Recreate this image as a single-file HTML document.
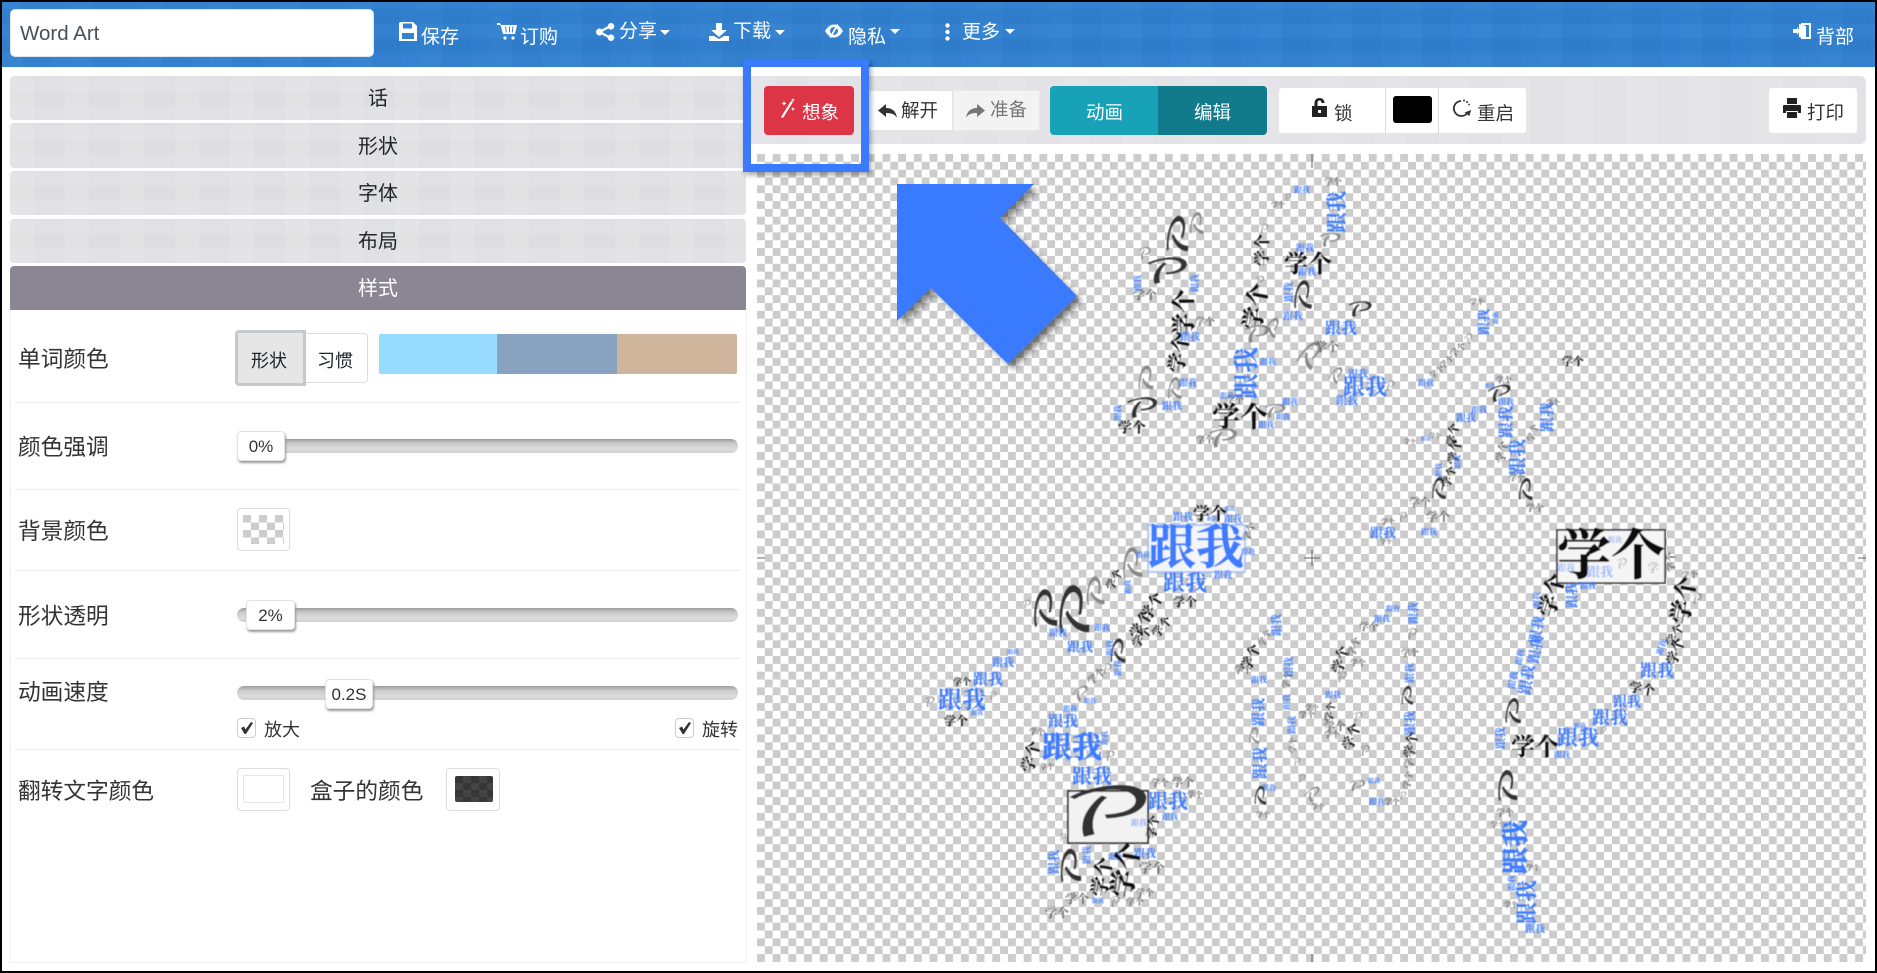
<!DOCTYPE html>
<html lang="zh"><head><meta charset="utf-8"><title>Word Art</title>
<style>
*{box-sizing:border-box}
html,body{margin:0;padding:0;background:#fff}
body{width:1877px;height:973px;position:relative;overflow:hidden;font-family:"Liberation Sans","Noto Sans CJK SC",sans-serif;color:#212529}
.a{position:absolute}
.t{position:absolute;white-space:nowrap;line-height:1}
.hd{left:0;top:2px;width:1877px;height:65px;background-color:#2f7fcf;background-image:repeating-linear-gradient(90deg,rgba(255,255,255,.02) 0 22px,rgba(0,0,0,.012) 22px 51px,rgba(255,255,255,.012) 51px 70px),repeating-linear-gradient(0deg,rgba(255,255,255,.018) 0 14px,rgba(0,0,0,.015) 14px 29px)}
.w{color:#fff;font-size:19px}
.car{position:absolute;width:0;height:0;border-left:5px solid transparent;border-right:5px solid transparent;border-top:5px solid #fff}
.bar{left:10px;width:736px;border-radius:4px;background-color:#e2e2e6;background-image:repeating-linear-gradient(90deg,rgba(255,255,255,.05) 0 24px,rgba(0,0,0,.006) 24px 55px),repeating-linear-gradient(0deg,rgba(255,255,255,.04) 0 14px,rgba(0,0,0,.006) 14px 29px);text-align:center;font-size:20px;color:#212529}
.dv{left:15px;width:725px;height:1px;background:#ececec}
.lb{font-size:22.7px;color:#333}
.track{left:237px;width:501px;height:14px;border-radius:7px;background:linear-gradient(#9c9c9c,#c8c8c8 30%,#dcdcdc 70%,#d0d0d0)}
.hdl{background:#fff;border:1px solid #e2e2e2;border-radius:4px;box-shadow:1px 2px 2px #999;text-align:center;font-size:17px;color:#333;line-height:30px;height:30px}
.box{background:#fff;border:1px solid #ddd;border-radius:4px;width:53px;height:43px}
.chk{width:19px;height:20px;border:1px solid #ccc;border-radius:4px;background:#fff}
.checks{background-color:#fff;background-image:conic-gradient(#fff 25%,#ccc 25% 50%,#fff 50% 75%,#ccc 75%);background-size:15.7px 15.7px}
svg.i{position:absolute;fill:currentColor;overflow:visible}
svg.cl text{text-anchor:middle;dominant-baseline:central}
.b{fill:#3d7bff;font-family:"Liberation Serif","Noto Serif CJK SC",serif;font-weight:700}
.k{fill:#111;font-family:"Liberation Serif","Noto Serif CJK SC",serif;font-weight:700}
.g{fill:#666;font-family:"Liberation Serif","Noto Serif CJK SC",serif;font-weight:700}
.p{fill:#333;font-family:"DejaVu Math TeX Gyre","DejaVu Serif","Liberation Serif",serif}
.q{fill:#888;font-family:"DejaVu Math TeX Gyre","DejaVu Serif","Liberation Serif",serif}
.s{stroke-width:.5px}
.b.s{stroke:#3d7bff}.k.s{stroke:#111}
</style></head><body>

<div class="a hd"></div>
<div class="a" style="left:10px;top:9px;width:364px;height:48px;background:#fff;border-radius:5px;border:1px solid #dfe6ee"></div>
<div class="t" style="left:20px;top:24px;font-size:20.5px;color:#495057">Word Art</div>

<svg class="i" style="left:399px;top:22px;color:#fff" width="18" height="19" viewBox="0 0 18 19"><path d="M1 0h13l4 4v15H0V1zM4 1.500v5h9v-5zM3 11v6h12v-6z" fill-rule="evenodd"/></svg>
<div class="t w" style="left:421px;top:28px">保存</div>
<svg class="i" style="left:497px;top:23px;color:#fff" width="20" height="17" viewBox="0 0 20 17"><path d="M0 0h3l1 2h16l-2 9H6L3.500 2H0z M8 3.500l.8 6h1l-.8-6zm4 0v6h1v-6zm3.500 0l-.8 6h1l.8-6z" fill-rule="evenodd"/><circle cx="8" cy="15" r="1.600"/><circle cx="16" cy="15" r="1.600"/></svg>
<div class="t w" style="left:520px;top:28px">订购</div>
<svg class="i" style="left:596px;top:23px;color:#fff" width="19" height="18" viewBox="0 0 19 18"><circle cx="3.500" cy="9" r="3.500"/><circle cx="15" cy="3.300" r="3.300"/><circle cx="15" cy="14.700" r="3.300"/><path d="M3 8L14 2l1 2L4 10zM4 8l11 6-1 2L3 10z"/></svg>
<div class="t w" style="left:619px;top:22px">分享</div><div class="car" style="left:660px;top:30px"></div>
<svg class="i" style="left:709px;top:23px;color:#fff" width="20" height="18" viewBox="0 0 20 18"><path d="M7 0h6v7h5l-8 7-8-7h5zM0 13h5l5 3 5-3h5v5H0z"/></svg>
<div class="t w" style="left:733px;top:22px">下载</div><div class="car" style="left:775px;top:30px"></div>
<svg class="i" style="left:825px;top:24px;color:#fff" width="18" height="14" viewBox="0 0 18 14"><path d="M0 7C3 2 6 .5 9 .5S15 2 18 7c-3 5-6 6.500-9 6.500S3 12 0 7zm5 0c0 2 2 4 4 4s4-2 4-4-2-4-4-4-4 2-4 4z" fill-rule="evenodd"/><path d="M12 0l1.500 1L6 14l-1.500-1z"/></svg>
<div class="t w" style="left:848px;top:28px">隐私</div><div class="car" style="left:890px;top:29px"></div>
<svg class="i" style="left:945px;top:23px;color:#fff" width="5" height="18" viewBox="0 0 5 18"><circle cx="2.500" cy="2.500" r="2.200"/><circle cx="2.500" cy="9" r="2.200"/><circle cx="2.500" cy="15.500" r="2.200"/></svg>
<div class="t w" style="left:962px;top:23px">更多</div><div class="car" style="left:1005px;top:29px"></div>
<svg class="i" style="left:1793px;top:23px;color:#fff" width="18" height="16" viewBox="0 0 18 16"><path d="M8 0h10v16H8v-2l8 0V2L8 2z" fill-rule="evenodd"/><path d="M6 1l7 2v13l-7-2zM0 6h4V4l3 4-3 4v-2H0z"/></svg>
<div class="t w" style="left:1816px;top:28px">背部</div>

<!-- accordion -->
<div class="a bar" style="top:76px;height:44px;line-height:47px">话</div>
<div class="a bar" style="top:123px;height:45px;line-height:49px">形状</div>
<div class="a bar" style="top:171px;height:44px;line-height:47px">字体</div>
<div class="a bar" style="top:219px;height:44px;line-height:46px">布局</div>
<div class="a bar" style="top:266px;height:44px;line-height:47px;background-color:#8a8693;background-image:none;color:#fff;border-radius:4px 4px 0 0">样式</div>

<div class="a" style="left:10px;top:310px;width:737px;height:653px;border:1px solid #efefef;border-top:0"></div>

<!-- row 1 -->
<div class="t lb" style="left:18px;top:348px">单词颜色</div>
<div class="a" style="left:305px;top:333px;width:63px;height:50px;background:#fff;border:1px solid #ddd;border-radius:0 4px 4px 0"></div>
<div class="a" style="left:235px;top:330px;width:71px;height:56px;background:#e6e6e6;border:3px solid #c5c9cd;border-radius:4px 0 0 4px"></div>
<div class="t" style="left:251px;top:352px;font-size:18px">形状</div>
<div class="t" style="left:317px;top:352px;font-size:18px">习惯</div>
<div class="a" style="left:379px;top:334px;width:118px;height:40px;background:#97dcfe;border-radius:2px 0 0 2px"></div>
<div class="a" style="left:497px;top:334px;width:120px;height:40px;background:#87a3bf"></div>
<div class="a" style="left:617px;top:334px;width:120px;height:40px;background:#ceb59b;border-radius:0 2px 2px 0"></div>
<div class="a dv" style="top:402px"></div>

<!-- row 2 -->
<div class="t lb" style="left:18px;top:436px">颜色强调</div>
<div class="a track" style="top:439px"></div>
<div class="a hdl" style="left:237px;top:431px;width:48px">0%</div>
<div class="a dv" style="top:489px"></div>

<!-- row 3 -->
<div class="t lb" style="left:18px;top:520px">背景颜色</div>
<div class="a box" style="left:237px;top:508px"></div>
<div class="a" style="left:243px;top:515px;width:41px;height:29px;background-color:#fff;background-image:conic-gradient(#fff 25%,#ccc 25% 50%,#fff 50% 75%,#ccc 75%);background-size:16px 15px"></div>
<div class="a dv" style="top:570px"></div>

<!-- row 4 -->
<div class="t lb" style="left:18px;top:605px">形状透明</div>
<div class="a track" style="top:608px"></div>
<div class="a hdl" style="left:246px;top:600px;width:49px">2%</div>
<div class="a dv" style="top:658px"></div>

<!-- row 5 -->
<div class="t lb" style="left:18px;top:681px">动画速度</div>
<div class="a track" style="top:686px"></div>
<div class="a hdl" style="left:325px;top:679px;width:48px">0.2S</div>
<div class="a chk" style="left:237px;top:718px"></div>
<svg class="i" style="left:240px;top:722px;color:#333" width="13" height="12" viewBox="0 0 13 12"><path d="M1 6l3-1.500 1.500 3L11 0l2 1-7 11h-1.500z"/></svg>
<div class="t" style="left:264px;top:721px;font-size:18px;color:#333">放大</div>
<div class="a chk" style="left:675px;top:718px"></div>
<svg class="i" style="left:678px;top:722px;color:#333" width="13" height="12" viewBox="0 0 13 12"><path d="M1 6l3-1.500 1.500 3L11 0l2 1-7 11h-1.500z"/></svg>
<div class="t" style="left:702px;top:721px;font-size:18px;color:#333">旋转</div>
<div class="a dv" style="top:749px"></div>

<!-- row 6 -->
<div class="t lb" style="left:18px;top:780px">翻转文字颜色</div>
<div class="a box" style="left:237px;top:768px"></div>
<div class="a" style="left:243px;top:775px;width:41px;height:28px;border:1px solid #e6e6e6"></div>
<div class="t lb" style="left:310px;top:780px">盒子的颜色</div>
<div class="a box" style="left:446px;top:768px;width:54px"></div>
<div class="a" style="left:455px;top:776px;width:38px;height:26px;background-color:#3a3a3a;background-image:conic-gradient(#444 25%,#363636 25% 50%,#444 50% 75%,#363636 75%);background-size:16px 14px;border-radius:2px"></div>

<!-- toolbar -->
<div class="a" style="left:745px;top:76px;width:1121px;height:68px;background-color:#e4e4e8;background-image:repeating-linear-gradient(90deg,rgba(255,255,255,.04) 0 30px,rgba(0,0,0,.005) 30px 63px);border-radius:0 6px 6px 0"></div>

<!-- canvas -->
<div class="a checks" style="left:757px;top:154px;width:1109px;height:808px"></div>

<!-- toolbar buttons -->
<div class="a" style="left:869px;top:90px;width:84px;height:41px;background:#fff;border:1px solid #e4e4e4;border-left:0"></div>
<svg class="i" style="left:878px;top:104px;color:#333" width="19" height="14" viewBox="0 0 19 14"><path d="M8 0v4c6 0 10 3 11 10-2-4-6-5-11-5v4L0 6.500z"/></svg>
<div class="t" style="left:901px;top:102px;font-size:18.500px;color:#333">解开</div>
<div class="a" style="left:953px;top:90px;width:87px;height:41px;background:#f3f3f4;border:1px solid #e8e8e8;border-radius:0 3px 3px 0"></div>
<svg class="i" style="left:966px;top:104px;color:#777" width="19" height="14" viewBox="0 0 19 14"><path d="M11 0v4C5 4 1 7 0 14c2-4 6-5 11-5v4l8-6.500z"/></svg>
<div class="t" style="left:990px;top:101px;font-size:18.500px;color:#777">准备</div>

<div class="a" style="left:1050px;top:86px;width:108px;height:49px;background:#17a2b8;border-radius:4px 0 0 4px"></div>
<div class="a" style="left:1158px;top:86px;width:109px;height:49px;background:#117a8b;border-radius:0 4px 4px 0"></div>
<div class="t" style="left:1086px;top:104px;font-size:18.500px;color:#fff">动画</div>
<div class="t" style="left:1194px;top:104px;font-size:18.500px;color:#fff">编辑</div>

<div class="a" style="left:1278px;top:87px;width:249px;height:47px;background:#fff;border:1px solid #e6e6e6;border-radius:4px"></div>
<div class="a" style="left:1385px;top:87px;width:1px;height:47px;background:#ddd"></div>
<div class="a" style="left:1438px;top:87px;width:1px;height:47px;background:#ddd"></div>
<svg class="i" style="left:1312px;top:98px;color:#222" width="15" height="19" viewBox="0 0 15 19"><path d="M0 8h2.500V5c0-3 2-5 5-5s5 2 5 5h-3c0-1.500-.7-2.500-2-2.500S5.500 3.500 5.500 5v3H15v11H0zm6 4v3h3v-3z" fill-rule="evenodd"/></svg>
<div class="t" style="left:1334px;top:105px;font-size:18.500px;color:#333">锁</div>
<div class="a" style="left:1393px;top:96px;width:39px;height:27px;background:#000;border-radius:3px"></div>
<svg class="i" style="left:1452px;top:99px;color:#333" width="20" height="19" viewBox="0 0 20 19" fill="none"><path d="M9 2a7.500 7.500 0 1 0 7 11" stroke="currentColor" stroke-width="1.800" fill="none"/><path d="M19 11l-1.500 6-5-3.500z" fill="currentColor"/><circle cx="12" cy="1.500" r="1" fill="currentColor"/><circle cx="15" cy="3" r="1" fill="currentColor"/><circle cx="17" cy="5.500" r=".9" fill="currentColor"/></svg>
<div class="t" style="left:1477px;top:105px;font-size:18.500px;color:#333">重启</div>

<div class="a" style="left:1768px;top:87px;width:90px;height:47px;background:#fff;border:1px solid #e6e6e6;border-radius:4px"></div>
<svg class="i" style="left:1783px;top:98px;color:#222" width="18" height="20" viewBox="0 0 18 20"><path d="M4 0h10v6H4zM1 7h16c.6 0 1 .4 1 1v7h-3v-2H3v2H0V8c0-.6.4-1 1-1zM4 14h10v6H4z"/></svg>
<div class="t" style="left:1807px;top:104px;font-size:18.500px;color:#333">打印</div>

<!-- word cloud -->
<svg class="a cl" style="left:0;top:0" width="1877" height="973" viewBox="0 0 1877 973">
<defs><filter id="bl" x="-5%" y="-5%" width="110%" height="110%"><feGaussianBlur stdDeviation=".6"/></filter></defs>
<path d="M1312 154v14M1312 954v8M757 558h8M1858 558h8M1312 550v16M1304 558h16" stroke="#666" stroke-width="1" fill="none"/>
<g filter="url(#bl)">
<rect x="1148" y="525" width="97" height="47" fill="#f3f5f8" stroke="#9dbcff" stroke-width="1.500"/>
<rect x="1557" y="530" width="108" height="53" fill="#f5f5f5" stroke="#222" stroke-width="1.500"/>
<rect x="1068" y="791" width="80" height="52" fill="#f2f2f2" stroke="#111" stroke-width="1.500"/>
<text class="b s" x="1196" y="548" font-size="48">跟我</text>
<text class="k s" x="1611" y="556" font-size="54">学个</text>
<text class="p" transform="translate(1108 817) scale(1.700 1)" font-size="66">𝒫</text>

<text class="b" x="1600" y="572" font-size="13" opacity=".5">跟我</text><text class="b" x="1566" y="568" font-size="9" opacity=".5">跟我</text><text class="b" x="1615" y="540" font-size="7" opacity=".5">跟我</text><text class="q" x="1622" y="565" font-size="14" opacity=".6">𝒫</text><text class="g" x="1653" y="568" font-size="12" opacity=".4">学</text>

<!-- lower-left -->
<text class="k" x="1210" y="514" font-size="17">学个</text>
<text class="b" x="1185" y="583" font-size="22">跟我</text>
<text class="k" x="1185" y="602" font-size="12">学个</text>
<text class="b s" x="1072" y="748" font-size="30">跟我</text>
<text class="b" x="962" y="701" font-size="24">跟我</text>
<text class="b" x="1092" y="777" font-size="20">跟我</text>
<text class="b" x="1168" y="802" font-size="20">跟我</text>
<text class="b" x="1063" y="722" font-size="15">跟我</text>
<text class="b" x="988" y="680" font-size="15">跟我</text>
<text class="b" x="1003" y="663" font-size="11">跟我</text>
<text class="b" x="1080" y="647" font-size="13">跟我</text>
<text class="k" x="956" y="721" font-size="12">学个</text>
<text class="p" transform="translate(1080 613) rotate(-75) scale(1.700 1)" font-size="44">𝒫</text>
<text class="p" transform="translate(1050 611) rotate(-75) scale(1.700 1)" font-size="34">𝒫</text>
<text class="q" transform="translate(1099 593) rotate(-75) scale(1.700 1)" font-size="26">𝒫</text>
<text class="q" transform="translate(1137 565) rotate(-75) scale(1.700 1)" font-size="28">𝒫</text>
<text class="k" transform="rotate(-60 1153 607)" x="1153" y="607" font-size="15">学个</text>
<text class="k" transform="rotate(-60 1142 625)" x="1142" y="625" font-size="15">学个</text>
<text class="k" transform="rotate(-50 1162 627)" x="1162" y="627" font-size="12">学个</text>
<text class="k" transform="rotate(-50 1142 637)" x="1142" y="637" font-size="12">学个</text>
<text class="p" transform="translate(1122 653) rotate(-70) scale(1.700 1)" font-size="22">𝒫</text>
<text class="q" x="1107" y="670" font-size="13">𝒫</text>
<text class="g" transform="rotate(-40 1097 677)" x="1097" y="677" font-size="10">学个</text>
<text class="q" transform="translate(1082 695) rotate(-30) scale(1.700 1)" font-size="15">𝒫</text>
<text class="b" x="1090" y="702" font-size="6">跟我</text><text class="b" x="1070" y="709" font-size="7">跟我</text>
<text class="b" transform="rotate(-90 1118 668)" x="1118" y="668" font-size="8">跟我</text>
<text class="b" transform="rotate(-90 1110 648)" x="1110" y="648" font-size="8">跟我</text>
<text class="b" x="1102" y="628" font-size="8">跟我</text><text class="b" x="1058" y="633" font-size="9">跟我</text>
<text class="q" x="1027" y="606" font-size="11">𝒫</text>
<text class="b" transform="rotate(-90 1128 587)" x="1128" y="587" font-size="7">跟我</text>
<text class="k" transform="rotate(-60 1115 580)" x="1115" y="580" font-size="11">学个</text>
<text class="b" x="1143" y="555" font-size="7">跟我</text><text class="b" x="1013" y="653" font-size="6">跟我</text>
<text class="k" x="962" y="682" font-size="9">学个</text><text class="q" x="930" y="703" font-size="13">𝒫</text>
<text class="q" x="993" y="697" font-size="10">𝒫</text><text class="b" x="977" y="714" font-size="6">跟我</text>
<text class="g" transform="rotate(-70 1250 532)" x="1250" y="532" font-size="10">学个</text>
<text class="b" x="1248" y="552" font-size="7">跟我</text><text class="b" x="1183" y="518" font-size="10">跟我</text>
<text class="b" x="1233" y="519" font-size="9">跟我</text><text class="b" x="1230" y="510" font-size="5">跟我</text>
<text class="b" x="1223" y="575" font-size="9">跟我</text><text class="b" x="1212" y="520" font-size="5">跟我</text>
<text class="k" transform="rotate(-75 1032 757)" x="1032" y="757" font-size="16">学个</text>
<text class="g" x="1037" y="732" font-size="8">学个</text>
<text class="b" transform="rotate(-90 1105 738)" x="1105" y="738" font-size="7">跟我</text>
<text class="q" x="1110" y="757" font-size="13">𝒫</text><text class="g" x="1047" y="767" font-size="7">学个</text>
<text class="g" x="1160" y="783" font-size="9">学个</text><text class="g" x="1183" y="783" font-size="11">学个</text><text class="g" x="1195" y="795" font-size="8">学个</text>
<text class="b" x="1170" y="817" font-size="8">跟我</text>
<text class="k" transform="rotate(-80 1153 827)" x="1153" y="827" font-size="12">学个</text>
<text class="b" x="1139" y="823" font-size="8" opacity=".6">跟我</text>
<text class="b" x="1145" y="854" font-size="11">跟我</text><text class="b" x="1115" y="857" font-size="7">跟我</text>
<text class="g" x="1152" y="868" font-size="13">学个</text>
<text class="p" transform="translate(1075 868) rotate(-75) scale(1.700 1)" font-size="30">𝒫</text>
<text class="b" transform="rotate(-90 1054 862)" x="1054" y="862" font-size="12">跟我</text>
<text class="b" transform="rotate(-90 1087 855)" x="1087" y="855" font-size="9">跟我</text>
<text class="k" transform="rotate(-80 1103 877)" x="1103" y="877" font-size="20">学个</text>
<text class="k" transform="rotate(-80 1127 870)" x="1127" y="870" font-size="28">学个</text>
<text class="g" x="1077" y="899" font-size="12">学个</text><text class="g" x="1057" y="913" font-size="12">学个</text>
<text class="q" x="1115" y="903" font-size="14">𝒫</text><text class="g" x="1135" y="902" font-size="9">学个</text><text class="g" x="1145" y="893" font-size="9">学个</text>
<text class="b" x="1098" y="902" font-size="6">跟我</text><text class="q" x="1063" y="838" font-size="9">𝒫</text>

<!-- top strokes -->
<text class="b" transform="rotate(-90 1337 212)" x="1337" y="212" font-size="21">跟我</text>
<text class="k" x="1308" y="265" font-size="24">学个</text>
<text class="k" transform="rotate(-90 1263 250)" x="1263" y="250" font-size="16">学个</text>
<text class="p" transform="translate(1167 273) scale(1.700 1)" font-size="34">𝒫</text>
<text class="p" transform="translate(1183 237) rotate(-70) scale(1.700 1)" font-size="32">𝒫</text>
<text class="q" transform="translate(1200 225) rotate(-70) scale(1.700 1)" font-size="20">𝒫</text>
<text class="k" transform="rotate(-90 1185 313)" x="1185" y="313" font-size="24">学个</text>
<text class="k" transform="rotate(-80 1180 353)" x="1180" y="353" font-size="20">学个</text>
<text class="q" transform="translate(1150 380) rotate(-70) scale(1.700 1)" font-size="22">𝒫</text>
<text class="p" transform="translate(1142 410) scale(1.700 1)" font-size="26">𝒫</text>
<text class="k" x="1132" y="429" font-size="14">学个</text>
<text class="g" x="1145" y="295" font-size="12">学个</text>
<text class="q" x="1145" y="255" font-size="16">𝒫</text>
<text class="g" x="1205" y="323" font-size="10">学个</text>
<text class="b" transform="rotate(-90 1195 283)" x="1195" y="283" font-size="9">跟我</text>
<text class="b" transform="rotate(-90 1138 283)" x="1138" y="283" font-size="8">跟我</text>
<text class="b" x="1190" y="338" font-size="10">跟我</text><text class="b" x="1172" y="407" font-size="10">跟我</text>
<text class="b" transform="rotate(-90 1118 413)" x="1118" y="413" font-size="8">跟我</text>
<text class="b" x="1188" y="383" font-size="9">跟我</text>
<text class="q" transform="translate(1178 390) rotate(-70) scale(1.700 1)" font-size="20">𝒫</text>
<text class="k" transform="rotate(-80 1257 307)" x="1257" y="307" font-size="24">学个</text>
<text class="q" transform="translate(1257 337) scale(1.700 1)" font-size="22">𝒫</text>
<text class="q" transform="translate(1275 330) rotate(-50) scale(1.700 1)" font-size="18">𝒫</text>
<text class="q" x="1264" y="230" font-size="12">𝒫</text><text class="q" x="1260" y="282" font-size="12">𝒫</text>
<text class="b" transform="rotate(-90 1247 373)" x="1247" y="373" font-size="26">跟我</text>
<text class="b" x="1268" y="362" font-size="8">跟我</text><text class="b" x="1227" y="396" font-size="7">跟我</text>
<text class="k" x="1240" y="418" font-size="28">学个</text>
<text class="q" transform="translate(1223 440) scale(1.700 1)" font-size="24">𝒫</text><text class="q" transform="translate(1275 413) scale(1.700 1)" font-size="18">𝒫</text>
<text class="b" x="1290" y="402" font-size="8">跟我</text><text class="b" x="1283" y="417" font-size="7">跟我</text><text class="b" x="1266" y="425" font-size="8">跟我</text>
<text class="g" x="1235" y="400" font-size="9">学个</text><text class="g" x="1205" y="440" font-size="9">学个</text>
<text class="p" transform="translate(1307 297) rotate(-70) scale(1.700 1)" font-size="26">𝒫</text>
<text class="b" x="1293" y="317" font-size="10">跟我</text>
<text class="b" x="1341" y="329" font-size="16">跟我</text>
<text class="p" transform="translate(1360 311) scale(1.700 1)" font-size="20">𝒫</text>
<text class="q" transform="translate(1313 358) rotate(-40) scale(1.700 1)" font-size="26">𝒫</text>
<text class="q" transform="translate(1338 377) rotate(-40) scale(1.700 1)" font-size="15">𝒫</text>
<text class="g" x="1327" y="347" font-size="12">学个</text>
<text class="b" x="1365" y="387" font-size="22">跟我</text>
<text class="b" x="1358" y="375" font-size="10">跟我</text><text class="b" x="1347" y="401" font-size="11">跟我</text>
<text class="q" x="1390" y="387" font-size="13">𝒫</text>
<text class="q" transform="translate(1330 242) scale(1.700 1)" font-size="18">𝒫</text>
<text class="b" x="1305" y="248" font-size="9">跟我</text><text class="b" x="1307" y="272" font-size="9">跟我</text>
<text class="b" transform="rotate(-90 1290 292)" x="1290" y="292" font-size="10">跟我</text>
<text class="g" x="1333" y="182" font-size="9">学个</text>
<text class="q" x="1288" y="198" font-size="9">𝒫</text><text class="b" x="1302" y="190" font-size="8">跟我</text>
<text class="g" x="1278" y="205" font-size="7">学个</text>

<!-- middle strokes -->
<text class="b" transform="rotate(-90 1484 322)" x="1484" y="322" font-size="13">跟我</text>
<text class="b" transform="rotate(-90 1497 318)" x="1497" y="318" font-size="6">跟我</text>
<text class="g" x="1477" y="302" font-size="7">学个</text>
<text class="q" transform="rotate(-30 1470 340)" x="1470" y="340" font-size="12">𝒫</text>
<text class="g" transform="rotate(-40 1458 350)" x="1458" y="350" font-size="9">学个</text>
<text class="g" transform="rotate(-40 1447 362)" x="1447" y="362" font-size="8">学个</text>
<text class="g" transform="rotate(-40 1437 372)" x="1437" y="372" font-size="8">学个</text>
<text class="b" x="1426" y="383" font-size="8">跟我</text>
<text class="k" x="1573" y="362" font-size="11">学个</text>
<text class="p" transform="translate(1500 395) rotate(-10) scale(1.700 1)" font-size="20">𝒫</text>
<text class="g" x="1504" y="380" font-size="8">学个</text><text class="b" x="1490" y="387" font-size="5">跟我</text>
<text class="b" transform="rotate(-90 1507 422)" x="1507" y="422" font-size="16">跟我</text>
<text class="b" x="1506" y="402" font-size="8">跟我</text><text class="b" x="1479" y="410" font-size="8">跟我</text><text class="b" x="1466" y="419" font-size="10">跟我</text>
<text class="k" transform="rotate(-80 1453 435)" x="1453" y="435" font-size="12">学个</text>
<text class="k" transform="rotate(-80 1455 452)" x="1455" y="452" font-size="13">学个</text>
<text class="g" x="1435" y="437" font-size="6">学个</text><text class="b" x="1426" y="440" font-size="5">跟我</text><text class="g" x="1410" y="443" font-size="6">学个</text>
<text class="b" transform="rotate(-90 1458 462)" x="1458" y="462" font-size="7">跟我</text>
<text class="b" transform="rotate(-90 1439 470)" x="1439" y="470" font-size="7">跟我</text>
<text class="k" transform="rotate(-70 1450 477)" x="1450" y="477" font-size="11">学个</text>
<text class="p" transform="translate(1442 490) rotate(-70) scale(1.700 1)" font-size="20">𝒫</text>
<text class="g" x="1420" y="503" font-size="11">学个</text><text class="g" x="1438" y="517" font-size="12">学个</text>
<text class="q" x="1403" y="518" font-size="12">𝒫</text><text class="g" x="1388" y="522" font-size="7">学个</text>
<text class="b" x="1383" y="533" font-size="13">跟我</text><text class="b" x="1429" y="532" font-size="8">跟我</text><text class="g" x="1386" y="543" font-size="6">学个</text>
<text class="b" transform="rotate(-90 1518 457)" x="1518" y="457" font-size="18">跟我</text>
<text class="g" transform="rotate(-80 1503 452)" x="1503" y="452" font-size="11">学个</text>
<text class="g" transform="rotate(-70 1533 433)" x="1533" y="433" font-size="9">学个</text>
<text class="b" transform="rotate(-90 1548 417)" x="1548" y="417" font-size="15">跟我</text>
<text class="g" x="1553" y="403" font-size="7">学个</text>
<text class="p" transform="translate(1529 491) rotate(-70) scale(1.700 1)" font-size="20">𝒫</text>
<text class="g" x="1535" y="508" font-size="9">学个</text><text class="g" x="1517" y="478" font-size="8">学个</text>

<!-- centre -->
<text class="b" transform="rotate(-90 1277 625)" x="1277" y="625" font-size="11">跟我</text>
<text class="k" transform="rotate(-65 1252 658)" x="1252" y="658" font-size="14">学个</text>
<text class="g" transform="rotate(-60 1265 638)" x="1265" y="638" font-size="9">学个</text>
<text class="g" x="1243" y="670" font-size="9">学个</text>
<text class="b" transform="rotate(-90 1290 667)" x="1290" y="667" font-size="10">跟我</text>
<text class="g" transform="rotate(-80 1287 680)" x="1287" y="680" font-size="9">学个</text>
<text class="b" transform="rotate(-90 1287 702)" x="1287" y="702" font-size="8">跟我</text>
<text class="b" transform="rotate(-90 1292 725)" x="1292" y="725" font-size="9">跟我</text>
<text class="g" transform="rotate(-90 1293 745)" x="1293" y="745" font-size="8">学个</text>
<text class="q" x="1297" y="763" font-size="10">𝒫</text><text class="q" x="1302" y="780" font-size="10">𝒫</text>
<text class="q" transform="translate(1314 796) rotate(-30) scale(1.700 1)" font-size="15">𝒫</text><text class="g" x="1318" y="807" font-size="7">学个</text>
<text class="b" x="1259" y="680" font-size="8">跟我</text>
<text class="b" transform="rotate(-90 1260 712)" x="1260" y="712" font-size="14">跟我</text>
<text class="q" transform="translate(1257 737) rotate(-70) scale(1.700 1)" font-size="15">𝒫</text>
<text class="b" transform="rotate(-90 1261 763)" x="1261" y="763" font-size="16">跟我</text>
<text class="b" x="1269" y="788" font-size="7">跟我</text>
<text class="p" transform="translate(1263 797) rotate(-70) scale(1.700 1)" font-size="17">𝒫</text><text class="g" x="1263" y="815" font-size="7">学个</text>
<text class="k" transform="rotate(-75 1342 660)" x="1342" y="660" font-size="14">学个</text>
<text class="g" transform="rotate(-70 1355 647)" x="1355" y="647" font-size="10">学个</text>
<text class="g" x="1358" y="663" font-size="8">学个</text><text class="q" x="1342" y="678" font-size="14">𝒫</text>
<text class="g" x="1369" y="628" font-size="10">学个</text>
<text class="b" x="1382" y="619" font-size="8">跟我</text><text class="b" x="1393" y="609" font-size="7">跟我</text><text class="b" x="1333" y="695" font-size="8">跟我</text>
<text class="k" transform="rotate(-80 1331 712)" x="1331" y="712" font-size="10">学个</text>
<text class="g" x="1312" y="708" font-size="7">学个</text><text class="g" x="1307" y="715" font-size="8">学个</text>
<text class="g" x="1335" y="727" font-size="11">学个</text><text class="g" x="1332" y="735" font-size="8">学个</text>
<text class="k" transform="rotate(-70 1353 737)" x="1353" y="737" font-size="14">学个</text>
<text class="q" x="1358" y="718" font-size="12">𝒫</text><text class="q" x="1365" y="752" font-size="14">𝒫</text><text class="q" transform="translate(1357 788) scale(1.700 1)" font-size="14">𝒫</text>
<text class="b" x="1374" y="782" font-size="6">跟我</text><text class="b" x="1377" y="802" font-size="8">跟我</text><text class="g" x="1392" y="802" font-size="8">学个</text><text class="q" x="1403" y="797" font-size="10">𝒫</text>
<text class="b" transform="rotate(-90 1414 613)" x="1414" y="613" font-size="11">跟我</text>
<text class="q" x="1412" y="635" font-size="14">𝒫</text><text class="g" x="1410" y="653" font-size="9">学个</text>
<text class="b" transform="rotate(-90 1411 673)" x="1411" y="673" font-size="10">跟我</text>
<text class="p" transform="translate(1410 697) rotate(-70) scale(1.700 1)" font-size="17">𝒫</text>
<text class="b" transform="rotate(-90 1410 723)" x="1410" y="723" font-size="12">跟我</text>
<text class="k" transform="rotate(-80 1411 745)" x="1411" y="745" font-size="13">学个</text>
<text class="g" transform="rotate(-80 1411 758)" x="1411" y="758" font-size="11">学个</text>
<text class="g" transform="rotate(-80 1408 780)" x="1408" y="780" font-size="9">学个</text>

<!-- right P -->
<text class="k" transform="rotate(-75 1552 595)" x="1552" y="595" font-size="22">学个</text>
<text class="b" transform="rotate(-90 1572 595)" x="1572" y="595" font-size="13">跟我</text>
<text class="b" x="1588" y="586" font-size="8">跟我</text>
<text class="b" transform="rotate(-90 1537 600)" x="1537" y="600" font-size="8">跟我</text>
<text class="b" transform="rotate(-80 1538 630)" x="1538" y="630" font-size="14">跟我</text>
<text class="b" transform="rotate(-80 1537 650)" x="1537" y="650" font-size="14">跟我</text>
<text class="b" transform="rotate(-80 1528 680)" x="1528" y="680" font-size="15">跟我</text>
<text class="b" transform="rotate(-80 1513 680)" x="1513" y="680" font-size="9">跟我</text>
<text class="b" transform="rotate(-80 1520 657)" x="1520" y="657" font-size="8">跟我</text>
<text class="p" transform="translate(1517 713) rotate(-70) scale(1.700 1)" font-size="23">𝒫</text>
<text class="b" transform="rotate(-90 1501 738)" x="1501" y="738" font-size="11">跟我</text>
<text class="k" x="1535" y="748" font-size="24">学个</text>
<text class="b" x="1578" y="738" font-size="21">跟我</text>
<text class="b" x="1562" y="755" font-size="8">跟我</text><text class="q" x="1603" y="732" font-size="10">𝒫</text><text class="b" x="1580" y="727" font-size="6">跟我</text>
<text class="b" x="1610" y="718" font-size="18">跟我</text><text class="b" x="1627" y="703" font-size="14">跟我</text>
<text class="k" transform="rotate(10 1642 689)" x="1642" y="689" font-size="13">学个</text>
<text class="b" x="1657" y="671" font-size="17">跟我</text>
<text class="b" transform="rotate(-70 1662 647)" x="1662" y="647" font-size="8">跟我</text>
<text class="k" transform="rotate(-70 1677 652)" x="1677" y="652" font-size="14">学个</text>
<text class="k" transform="rotate(-60 1675 635)" x="1675" y="635" font-size="12">学个</text>
<text class="k" transform="rotate(-80 1685 600)" x="1685" y="600" font-size="24">学个</text>
<text class="g" transform="rotate(-90 1672 562)" x="1672" y="562" font-size="10">学个</text>
<text class="q" x="1697" y="600" font-size="14">𝒫</text><text class="g" x="1690" y="575" font-size="8">学个</text>
<text class="p" transform="translate(1512 788) rotate(-75) scale(1.700 1)" font-size="28">𝒫</text>
<text class="g" x="1505" y="813" font-size="9">学个</text><text class="g" x="1498" y="825" font-size="7">学个</text>
<text class="b s" transform="rotate(-90 1516 847)" x="1516" y="847" font-size="27">跟我</text>
<text class="b" transform="rotate(-90 1527 902)" x="1527" y="902" font-size="22">跟我</text>
<text class="b" transform="rotate(-90 1512 883)" x="1512" y="883" font-size="8">跟我</text>
<text class="b" x="1535" y="930" font-size="10">跟我</text>
<text class="g" x="1533" y="868" font-size="7">学个</text><text class="g" x="1511" y="905" font-size="7">学个</text>
</g>
</svg>

<!-- arrow -->
<svg class="a" style="left:880px;top:170px;overflow:visible" width="220" height="220" viewBox="880 170 220 220">
<defs><filter id="sh" x="-20%" y="-20%" width="140%" height="140%"><feGaussianBlur stdDeviation="3"/></filter></defs>
<polygon points="897,184 1034,184 1000,218 1077,296 1008,364 931,288 897,321" fill="#000" opacity=".45" transform="translate(5 5)" filter="url(#sh)"/>
<polygon points="897,184 1034,184 1000,218 1077,296 1008,364 931,288 897,321" fill="#3a7afe"/>
</svg>

<!-- highlight box + imagine -->
<div class="a" style="left:743px;top:59px;width:126px;height:113px;border:8px solid #3a7afe;box-shadow:2px 3px 5px rgba(0,0,0,.35)"></div>
<div class="a" style="left:764px;top:86px;width:90px;height:49px;background:#dc3545;border-radius:4px"></div>
<svg class="i" style="left:779px;top:98px;color:#fff" width="17" height="20" viewBox="0 0 17 20"><path d="M12 3l2 1L4 20l-2-1z"/><path d="M5 3l.8 1.800L7.500 5.500 5.800 6.300 5 8 4.200 6.300 2.500 5.500l1.700-.7zM14 0l.6 1.400 1.400.6-1.400.6L14 4l-.6-1.400L12 2l1.400-.6zM14 9l.6 1.400 1.400.6-1.400.6L14 13l-.6-1.400L12 11l1.400-.6z"/></svg>
<div class="t" style="left:802px;top:104px;font-size:18.500px;color:#fff">想象</div>

<!-- screenshot frame -->
<div class="a" style="left:0;top:0;width:1877px;height:973px;border:2px solid #000;pointer-events:none"></div>
</body></html>
